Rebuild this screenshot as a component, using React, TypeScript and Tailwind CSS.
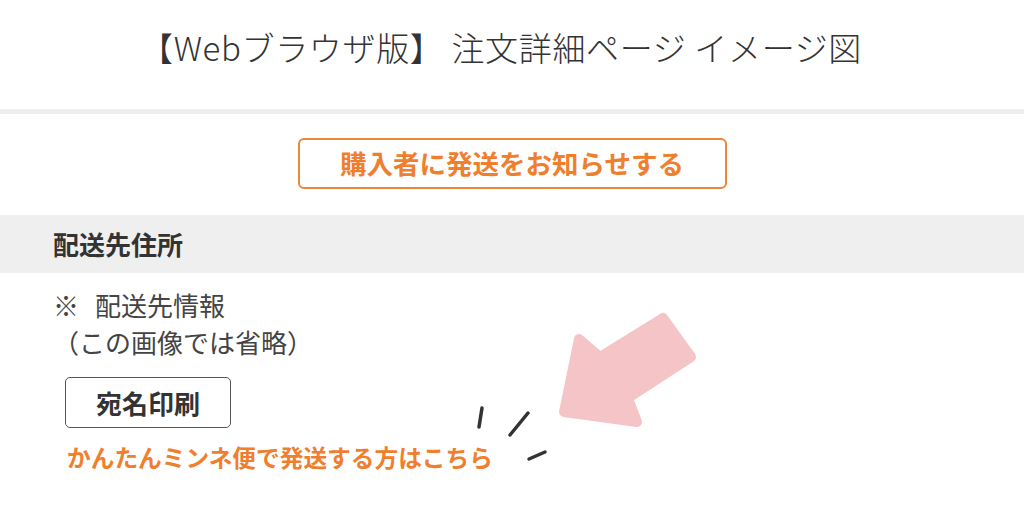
// Order detail page mock (web browser version)

const font = { fontFamily: '"Noto Sans CJK JP", "Noto Sans", sans-serif' };

const PointerArrow = () => (
  <svg
    className="absolute left-0 top-0 pointer-events-none"
    width="1024"
    height="512"
    viewBox="0 0 1024 512"
  >
    <polygon
      points="564,412 579,339 600,357 663,318 691,357 628,398 637,422"
      fill="#f5c4c6"
      stroke="#f5c4c6"
      strokeWidth="10"
      strokeLinejoin="round"
    />
    <g stroke="#333333" strokeWidth="3.5" strokeLinecap="round">
      <line x1="482" y1="408" x2="479" y2="427" />
      <line x1="528" y1="413" x2="510" y2="435" />
      <line x1="545" y1="452" x2="529" y2="459" />
    </g>
  </svg>
);

export default function App() {
  return (
    <div className="relative w-[1024px] h-[512px] overflow-hidden bg-white text-[#333333]" style={font}>
      {/* Header */}
      <div className="h-[109px] flex items-center justify-center pb-[15px] pr-[22px]">
        <h1 className="text-[33px] font-light tracking-[0.02em] leading-none">
          【Webブラウザ版】 注文詳細ページ イメージ図
        </h1>
      </div>
      <div className="h-[5px] bg-[#eeeeee]" />

      {/* Notify button */}
      <div className="pt-[24px] pb-[26px] flex justify-center">
        <button className="w-[429px] h-[51px] border-2 border-[#ef8536] rounded-[6px] text-[26.5px] font-bold text-[#ef7f2e] leading-none flex items-center justify-center">
          購入者に発送をお知らせする
        </button>
      </div>

      {/* Section heading */}
      <div className="h-[58px] bg-[#f0efef] px-[53px] flex items-center">
        <h2 className="text-[26px] font-bold leading-none text-[#333333]">配送先住所</h2>
      </div>

      {/* Address content */}
      <div className="px-[53px] pt-[13px]">
        <p className="text-[26px] leading-[37px] text-[#444444]">
          <span>※</span>
          <span className="ml-[16px]">配送先情報</span>
          <br />
          （この画像では省略）
        </p>
        <button className="mt-[17px] ml-[12px] w-[166px] h-[51px] border border-[#555555] rounded-[5px] text-[26px] font-bold leading-none text-[#333333] flex items-center justify-center">
          宛名印刷
        </button>
        <a className="block mt-[14px] ml-[14px] text-[23.7px] font-bold leading-[30px] text-[#ef7f2e]">
          かんたんミンネ便で発送する方はこちら
        </a>
      </div>

      <PointerArrow />
    </div>
  );
}
